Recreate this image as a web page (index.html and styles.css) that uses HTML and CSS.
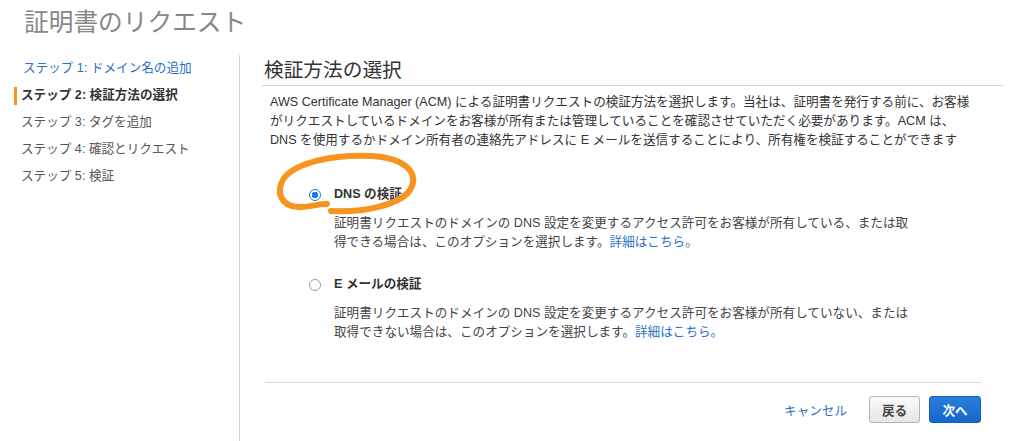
FILE: index.html
```html
<!DOCTYPE html>
<html>
<head>
    <meta charset="utf-8">
    <link rel="stylesheet" href="styles.css">
</head>
<body>
    <div class="page">
        <h1 class="page-title">証明書のリクエスト</h1>

        <div class="layout">
            <nav class="steps">
                <a class="step step-link" href="#">ステップ 1: ドメイン名の追加</a>
                <div class="step step-current">ステップ 2: 検証方法の選択</div>
                <div class="step">ステップ 3: タグを追加</div>
                <div class="step">ステップ 4: 確認とリクエスト</div>
                <div class="step">ステップ 5: 検証</div>
            </nav>

            <main class="content">
                <h2 class="section-title">検証方法の選択</h2>
                <p class="intro">AWS Certificate Manager (ACM) による証明書リクエストの検証方法を選択します。当社は、証明書を発行する前に、お客様がリクエストしているドメインをお客様が所有または管理していることを確認させていただく必要があります。ACM は、DNS を使用するかドメイン所有者の連絡先アドレスに E メールを送信することにより、所有権を検証することができます</p>

                <div class="option option-first">
                    <span class="radio radio-checked"></span>
                    <div class="option-body">
                        <div class="option-label">DNS の検証</div>
                        <p class="option-desc">証明書リクエストのドメインの DNS 設定を変更するアクセス許可をお客様が所有している、または取得できる場合は、このオプションを選択します。<a href="#">詳細はこちら。</a></p>
                    </div>
                </div>

                <div class="option">
                    <span class="radio"></span>
                    <div class="option-body">
                        <div class="option-label">E メールの検証</div>
                        <p class="option-desc">証明書リクエストのドメインの DNS 設定を変更するアクセス許可をお客様が所有していない、または取得できない場合は、このオプションを選択します。<a href="#">詳細はこちら。</a></p>
                    </div>
                </div>

                <div class="footer">
                    <a class="cancel" href="#">キャンセル</a>
                    <button class="btn btn-back">戻る</button>
                    <button class="btn btn-next">次へ</button>
                </div>
            </main>
        </div>

        <!-- hand-drawn highlight over the DNS option -->
        <svg class="scribble" width="1009" height="441" viewBox="0 0 1009 441">
            <path d="M 331 211 C 362 213, 400 205, 410 190 C 420 173, 405 158, 372 156 C 332 154, 296 163, 284 178 C 275 192, 281 206, 298 207 C 310 208, 318 203, 327 204"
                fill="none" stroke="#f7941d" stroke-width="6" stroke-linecap="round" stroke-linejoin="round" />
        </svg>
    </div>
</body>
</html>
```

FILE: styles.css
```css
body {
    margin: 0;
    background-color: #fff;
    color: #333;
    font-family: "Liberation Sans", "Noto Sans CJK JP", sans-serif;
    font-size: 12.6px;
}

.page {
    position: relative;
    height: 441px;
    overflow: hidden;
}

.page-title {
    margin: 0;
    padding: 8px 0 17px 24px;
    font-size: 24.7px;
    font-weight: normal;
    line-height: 30px;
    color: #878787;
}

.layout {
    display: flex;
    height: 386px;
}

/* Sidebar steps */
.steps {
    width: 239px;
    flex-shrink: 0;
    border-right: 1px solid #d5d5d5;
    display: flex;
    flex-direction: column;
}

.step {
    position: relative;
    display: block;
    height: 27px;
    line-height: 27px;
    padding-left: 21px;
    color: #555;
    text-decoration: none;
}

.step-link {
    padding-left: 23px;
    color: #2a6fc4;
}

.step-current {
    font-weight: bold;
    color: #333;
}

.step-current::before {
    content: "";
    position: absolute;
    left: 14px;
    top: 5px;
    width: 3px;
    height: 18px;
    background-color: #f7931e;
}

/* Main content */
.content {
    flex: 1;
    padding: 0 6px 0 22px;
}

.section-title {
    margin: 0;
    padding: 3px 0 3px 2px;
    font-size: 19.7px;
    font-weight: normal;
    line-height: 24px;
    color: #333;
    border-bottom: 1px solid #d5d5d5;
}

.intro {
    margin: 7px 0 0 0;
    padding: 0 28px 0 8px;
    line-height: 19px;
}

.option {
    display: flex;
    align-items: flex-start;
    margin-top: 23px;
    padding-left: 47px;
}

.option-first {
    margin-top: 35px;
}

.radio {
    width: 12px;
    height: 12px;
    margin-top: 3.5px;
    margin-right: 13px;
    box-sizing: border-box;
    border: 1px solid #9a9a9a;
    border-radius: 50%;
    background-color: #fff;
    flex-shrink: 0;
}

.radio-checked {
    border: 1.5px solid #1f7cf0;
    background: radial-gradient(circle, #1f7cf0 0, #1f7cf0 3px, #fff 3.5px);
}

.option-label {
    font-weight: bold;
    line-height: 19px;
    color: #333;
}

.option-desc {
    margin: 10px 0 0 0;
    max-width: 580px;
    line-height: 19px;
    color: #444;
}

.option-desc a,
.cancel {
    color: #2a6fc4;
    text-decoration: none;
}

/* Footer buttons */
.footer {
    display: flex;
    justify-content: flex-end;
    align-items: center;
    margin: 40px 22px 0 3px;
    padding-top: 13px;
    border-top: 1px solid #d9d9d9;
}

.cancel {
    margin-right: 22px;
}

.btn {
    height: 27px;
    padding: 0;
    border-radius: 3px;
    font-family: inherit;
    font-size: 12.6px;
    font-weight: bold;
    cursor: pointer;
}

.btn-back {
    width: 51px;
    margin-right: 9px;
    color: #444;
    border: 1px solid #b5b5b5;
    background: linear-gradient(#fafafa, #e6e6e6);
}

.btn-next {
    width: 52px;
    color: #fff;
    border: 1px solid #1560c0;
    background: linear-gradient(#2b7ddb, #1667c9);
}

.scribble {
    position: absolute;
    left: 0;
    top: 0;
    pointer-events: none;
}
```
